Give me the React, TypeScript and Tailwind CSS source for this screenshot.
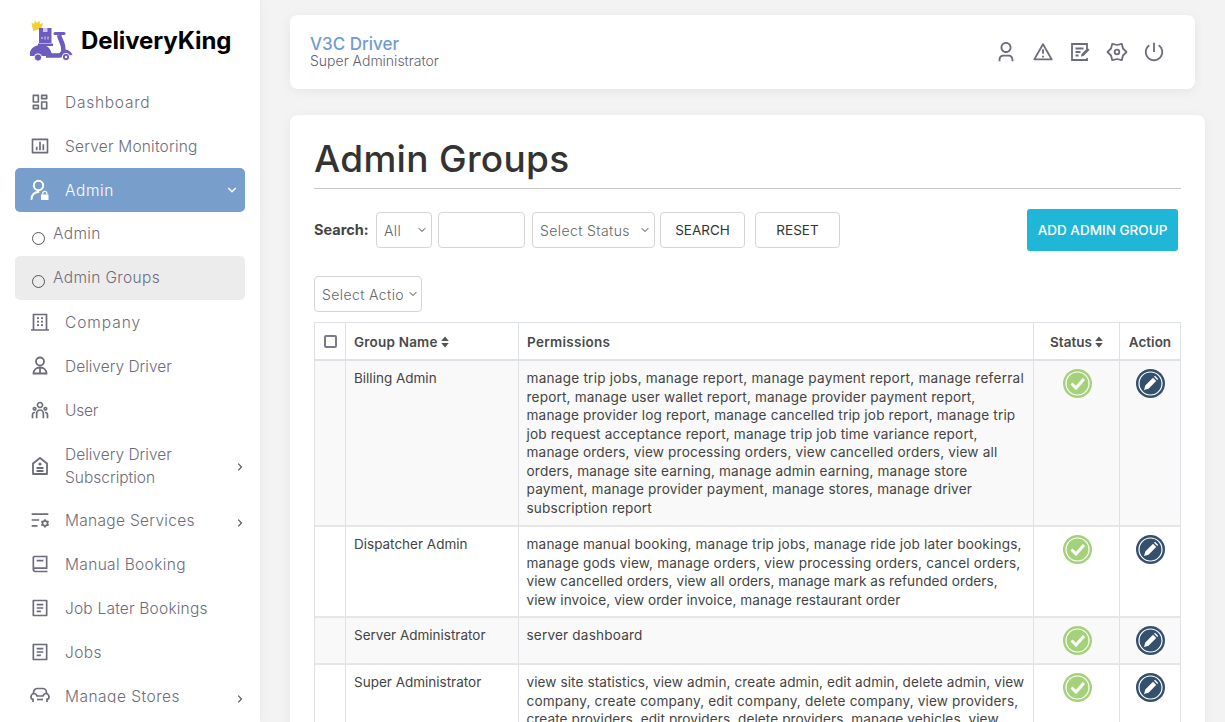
import React from "react";
import { ChevronDown } from "lucide-react";
import { RiDashboardLine, RiBarChartBoxLine, RiTeamLine, RiListSettingsLine, RiBook2Line, RiFileList2Line, RiArrowDownSLine, RiArrowRightSLine, RiUser3Line, RiAlertLine, RiShutDownLine } from "react-icons/ri";

const F = "font-['Inter','Liberation_Sans',sans-serif]";

const IconAdmin = () => (
  <svg width="20" height="22" viewBox="0 0 20 22" fill="none">
    <circle cx="8.5" cy="6.5" r="4.7" stroke="currentColor" strokeWidth="2" />
    <path d="M1.5 20c0-4 3-7 7-7" stroke="currentColor" strokeWidth="2" strokeLinecap="round" />
    <path d="M11 15.5h7.5V21H11z" fill="currentColor" />
    <path d="M12.8 15.5v-1.2a2 2 0 0 1 4 0v1.2" stroke="currentColor" strokeWidth="1.3" />
  </svg>
);
const IconCompany = () => (
  <svg width="20" height="20" viewBox="0 0 20 20" fill="none" stroke="currentColor" strokeWidth="1.7">
    <path d="M3.500 18V2.500h13V18M1 18h18" />
    <path d="M7 6.200h2M11 6.200h2M7 9.700h2M11 9.700h2M7 13.200h2M11 13.200h2" strokeWidth="1.800" />
  </svg>
);
const IconDriver = () => (
  <svg width="20" height="20" viewBox="0 0 20 20" fill="none" stroke="currentColor" strokeWidth="1.8">
    <circle cx="10" cy="5.500" r="4" />
    <path d="M3.500 17.500c0-3.800 2.800-6 6.500-6s6.500 2.200 6.500 6zM10 11.500v6" />
  </svg>
);
const IconSub = () => (
  <svg width="20" height="20" viewBox="0 0 20 20" fill="none" stroke="currentColor" strokeWidth="1.8">
    <path d="M3 7.500 10 2l7 5.500V18H3z" strokeLinejoin="round" />
    <circle cx="10" cy="8" r="1.600" fill="currentColor" stroke="none" />
    <path d="M6.500 12h7M6.500 15h7" />
  </svg>
);
const IconStore = () => (
  <svg width="20" height="20" viewBox="0 0 20 20" fill="none" stroke="currentColor" strokeWidth="1.700" strokeLinejoin="round">
    <path d="M3.500 7.500V6.500a4 4 0 0 1 4-4h5a4 4 0 0 1 4 4v1" />
    <path d="M3 16v-3H2.500C1.500 13 1 12 1 11c0-2 1.500-3.500 3-3.500 1.500 0 2.500 1 3 2.500h6c.5-1.500 1.500-2.500 3-2.500 1.500 0 3 1.500 3 3.500 0 1-.5 2-1.500 2H17v3" />
    <path d="M7 13.500h6" />
  </svg>
);
const IconEdit = () => (
  <svg width="22" height="22" viewBox="0 0 22 22" fill="none" stroke="currentColor" strokeWidth="1.800">
    <path d="M18 8V3H3v16h15v-2" />
    <path d="M6.500 7.500h8M6.500 11h5M6.500 14.500h3" />
    <path d="m12 15.500.5-2.500 6-6 2 2-6 6z" fill="currentColor" stroke="none" />
  </svg>
);
const IconGear = () => (
  <svg width="22" height="22" viewBox="0 0 22 22" fill="none" stroke="currentColor" strokeWidth="1.800" strokeLinejoin="round">
    <path d="M20.500 11 17 14.500 15.750 19.200 11 18 6.250 19.200 5 14.500 1.500 11 5 7.500 6.250 2.800 11 4 15.750 2.800 17 7.500z" />
    <circle cx="11" cy="11" r="2.300" />
  </svg>
);
const Logo = () => (
  <svg width="46" height="44" viewBox="0 0 46 44">
    <path d="M4 8 3.500 4.500 6 6l1-3.500L9 5l2.500-2.500.5 3.500 3-1-1.500 5.500-8 2.500z" fill="#f5cf2f" />
    <path d="M11 10h12.500v15H11z" fill="#6d5bbd" />
    <path d="M15 10h4.500v4H15z" fill="#cfc8ec" />
    <path d="M13 20h2M17 18.500v3M20 18.500v3" stroke="#e4e0f6" strokeWidth="1" />
    <path d="M10 25.500h15v2.500H10z" fill="#6d5bbd" />
    <path d="M2 38c-1-7 4-11 11-11s10 4 11 10l1 1z" fill="#6d5bbd" />
    <path d="M18 37.500H31C35 37.500 36 33 35 28 34 24 32 21 31 17" stroke="#6d5bbd" strokeWidth="4.500" fill="none" />
    <path d="M27 15.500H36" stroke="#6d5bbd" strokeWidth="3" strokeLinecap="round" />
    <path d="M31 38C31.500 31 41 29 44.500 37z" fill="#6d5bbd" />
    <circle cx="10" cy="39.500" r="3.700" fill="#6d5bbd" stroke="#fff" strokeWidth="1" />
    <circle cx="38" cy="39" r="3.700" fill="#6d5bbd" stroke="#fff" strokeWidth="1" />
    <circle cx="38" cy="39" r="1.200" fill="#fff" />
  </svg>
);

type Item = { icon: React.ReactNode; label: React.ReactNode; arrow?: boolean; two?: boolean; tr?: string };
const afterItems: Item[] = [
  { icon: <IconCompany />, label: "Company", tr: "tracking-[0.95px]" },
  { icon: <IconDriver />, label: "Delivery Driver", tr: "tracking-[0px]" },
  { icon: <RiTeamLine size={20} />, label: "User", tr: "tracking-[-0.2px]" },
  { icon: <IconSub />, label: <>Delivery Driver<br />Subscription</>, arrow: true, two: true, tr: "tracking-[0px]" },
  { icon: <RiListSettingsLine size={20} />, label: "Manage Services", arrow: true, tr: "tracking-[0.3px]" },
  { icon: <RiBook2Line size={20} />, label: "Manual Booking", tr: "tracking-[0.35px]" },
  { icon: <RiFileList2Line size={20} />, label: "Job Later Bookings", tr: "tracking-[0.2px]" },
  { icon: <RiFileList2Line size={20} />, label: "Jobs", tr: "tracking-[0.4px]" },
  { icon: <IconStore />, label: "Manage Stores", arrow: true, tr: "tracking-[0.5px]" },
];

const NavRow = ({ icon, label, arrow, two, tr }: Item) => (
  <div className={`flex items-center pl-[15px] pr-[15px] mx-[15px] text-[#6c6c7c] ${two ? "h-[66px] pt-[2px]" : "h-[44px]"}`}>
    <span className="w-[20px] flex justify-center shrink-0">{icon}</span>
    <span className={`ml-[15px] flex-1 text-[15.500px] leading-[23px] font-light ${tr ?? "tracking-[0.2px]"}`}>{label}</span>
    {arrow && <RiArrowRightSLine size={14} className={`text-[#555] -mr-[17px] ${two ? "mt-[2px]" : "mt-[6px]"}`} />}
  </div>
);

const Sidebar = () => (
  <aside className="w-[260px] shrink-0 bg-white shadow-[0_0_12px_rgba(0,0,0,0.05)] flex flex-col h-screen">
    <div className="flex items-center h-[80px] pl-[28px] shrink-0">
      <Logo />
      <span className="ml-[7px] mt-[1px] text-[24px] font-bold text-black tracking-[-0.1px]">DeliveryKing</span>
    </div>
    <nav className="h-[623px] overflow-hidden">
      <NavRow icon={<RiDashboardLine size={20} />} label="Dashboard" tr="tracking-[0.75px]" />
      <NavRow icon={<RiBarChartBoxLine size={20} />} label="Server Monitoring" />
      <div className="flex items-center h-[44px] mx-[15px] pl-[15px] pr-[5px] rounded-[5px] bg-[#789ecc] text-white">
        <span className="w-[20px] flex justify-center"><IconAdmin /></span>
        <span className="ml-[15px] flex-1 text-[15.500px] tracking-[0.6px] font-light pt-[1px]">Admin</span>
        <RiArrowDownSLine size={16} />
      </div>
      <div className="flex items-center h-[44px] mx-[15px] pl-[17px] text-[#6c6c7c]">
        <span className="w-[13px] h-[13px] mt-[9px] rounded-full border border-[#555] shrink-0" />
        <span className="ml-[8px] text-[15.500px] font-light leading-none tracking-[0.35px] -mt-[1px]">Admin</span>
      </div>
      <div className="flex items-center h-[44px] mx-[15px] pl-[17px] rounded-[5px] bg-[#ececec] text-[#6c6c7c]">
        <span className="w-[13px] h-[13px] mt-[7px] rounded-full border border-[#555] shrink-0" />
        <span className="ml-[8px] text-[15.500px] font-light leading-none tracking-[0.35px] -mt-[1px]">Admin Groups</span>
      </div>
      {afterItems.map((it, i) => <NavRow key={i} {...it} />)}
    </nav>
  </aside>
);

const Lines = ({ lines }: { lines: (string | [string, string])[] }) => (
  <>
    {lines.map((l, i) =>
      typeof l === "string"
        ? <span key={i} className="block whitespace-nowrap">{l}</span>
        : <span key={i} className={`block whitespace-nowrap ${l[1]}`}>{l[0]}</span>
    )}
  </>
);

const rows: { name: string; bg: string; h: string; lines: (string | [string, string])[] }[] = [
  { name: "Billing Admin", bg: "bg-[#f9f9f9]", h: "h-[166px]", lines: [
    ["manage trip jobs, manage report, manage payment report, manage referral", "tracking-[0.23px]"],
    "report, manage user wallet report, manage provider payment report,",
    "manage provider log report, manage cancelled trip job report, manage trip",
    "job request acceptance report, manage trip job time variance report,",
    "manage orders, view processing orders, view cancelled orders, view all",
    "orders, manage site earning, manage admin earning, manage store",
    "payment, manage provider payment, manage stores, manage driver",
    "subscription report",
  ]},
  { name: "Dispatcher Admin", bg: "bg-white", h: "h-[91px]", lines: [
    "manage manual booking, manage trip jobs, manage ride job later bookings,",
    "manage gods view, manage orders, view processing orders, cancel orders,",
    ["view cancelled orders, view all orders, manage mark as refunded orders,", "tracking-[0.05px]"],
    ["view invoice, view order invoice, manage restaurant order", "tracking-[0.05px]"],
  ]},
  { name: "Server Administrator", bg: "bg-[#f9f9f9]", h: "h-[47px]", lines: ["server dashboard"] },
  { name: "Super Administrator", bg: "bg-white", h: "", lines: [
    ["view site statistics, view admin, create admin, edit admin, delete admin, view", "tracking-[0.08px]"],
    "company, create company, edit company, delete company, view providers,",
    ["create providers, edit providers, delete providers, manage vehicles, view", "tracking-[0.08px]"],
  ]},
];

const Sort = () => (
  <svg width="8" height="12" viewBox="0 0 8 12" className="ml-[3px] inline-block" fill="#555">
    <path d="M4 0.500 7.800 5H.2zM4 11.500.2 7h7.600z" />
  </svg>
);

const StatusIcon = () => (
  <svg width="29" height="29" viewBox="0 0 29 29">
    <circle cx="14.500" cy="14.500" r="14.500" fill="#a4d279" />
    <circle cx="14.500" cy="14.500" r="11.500" fill="#a4d279" stroke="#fff" strokeWidth="1.200" />
    <path d="M8.500 14.500 13 19l8-9" fill="none" stroke="#fff" strokeWidth="3" />
  </svg>
);
const ActionIcon = () => (
  <svg width="29" height="29" viewBox="0 0 29 29">
    <circle cx="14.500" cy="14.500" r="14.500" fill="#34506c" />
    <circle cx="14.500" cy="14.500" r="11.500" fill="#34506c" stroke="#fff" strokeWidth="1.200" />
    <path d="M8 21l1.300-4.500 7.700-7.700 3.200 3.200-7.700 7.700zM18 7.800l1-1 3.200 3.200-1 1z" fill="#fff" />
  </svg>
);

const ctrl = "h-[36px] rounded-[4px] border border-[#d5d5d5] bg-white text-[14px] text-[#666] font-light";
const btn = "h-[36px] rounded-[4px] border border-[#d5d5d5] bg-white text-[13.500px] text-[#333] flex items-center justify-center";

const Sel = ({ label, cls, right }: { label: string; cls: string; right: string }) => (
  <div className={`relative ${cls}`}>
    <select className={`${ctrl} w-full appearance-none pl-[7px] pr-[18px] tracking-[0.4px]`}><option>{label}</option></select>
    <ChevronDown size={12} strokeWidth={2} className={`absolute top-[12px] text-[#444] pointer-events-none ${right}`} />
  </div>
);

const td = "border-r border-[#dee2e6] shrink-0";

const Table = () => (
  <div className="w-[867px] border-l border-t border-[#dee2e6] text-[13.500px] leading-[18.570px] text-[#444]">
    <div className="flex h-[38px] border-b-2 border-[#dee2e6] font-semibold text-[13.500px] text-[#4a4a4a]">
      <div className={`${td} w-[31px] flex items-center justify-center`}>
        <span className="w-[13px] h-[13px] rounded-[2px] border-2 border-[#7a7a8a]" />
      </div>
      <div className={`${td} w-[173px] flex items-center pl-[8px] pt-[2px] tracking-[0.2px]`}>Group Name<Sort /></div>
      <div className={`${td} w-[515px] flex items-center pl-[8px] pt-[2px] tracking-[0.3px]`}>Permissions</div>
      <div className={`${td} w-[86px] flex items-center justify-center pt-[2px]`}>Status<Sort /></div>
      <div className={`${td} w-[61px] flex items-center justify-center pt-[2px]`}>Action</div>
    </div>
    {rows.map((r) => (
      <div key={r.name} className={`flex border-b-2 border-[#e6e6e6] ${r.bg} ${r.h}`}>
        <div className={`${td} w-[31px]`} />
        <div className={`${td} w-[173px] px-[8px] pt-[8px]`}>{r.name}</div>
        <div className={`${td} w-[515px] pl-[7.500px] pt-[8px] text-[13.600px] tracking-[0.17px]`}><Lines lines={r.lines} /></div>
        <div className={`${td} w-[86px] flex justify-center pt-[8px] pl-[1px]`}><StatusIcon /></div>
        <div className={`${td} w-[61px] flex justify-center pt-[8px]`}><ActionIcon /></div>
      </div>
    ))}
  </div>
);

export default function App() {
  return (
    <div className={`${F} flex h-screen overflow-hidden bg-[#f3f3f3]`}>
      <Sidebar />
      <main className="flex-1 min-w-0 pl-[30px] pr-[20px] pt-[15px]">
        <header className="h-[74px] mr-[10px] rounded-[8px] bg-white shadow-[0_2px_12px_rgba(0,0,0,0.06)] flex items-center pl-[20px] pr-[30px]">
          <div className="flex-1">
            <div className="text-[17px] leading-[19px] font-medium text-[#6f9cd3]">V3C Driver</div>
            <div className="text-[14px] leading-[16px] -mt-[1px] font-light text-[#5f5f6f]">Super Administrator</div>
          </div>
          <div className="flex items-center gap-[15px] text-[#6c6c7c]">
            <RiUser3Line size={22} />
            <RiAlertLine size={22} />
            <IconEdit />
            <IconGear />
            <RiShutDownLine size={22} />
          </div>
        </header>
        <section className="mt-[26px] rounded-[8px] bg-white pl-[24px] pt-[20px] h-[700px] shadow-[0_2px_12px_rgba(0,0,0,0.05)]">
          <h1 className="text-[37px] leading-[48px] font-[450] text-[#333] tracking-[0.3px] pb-[5px] border-b border-[#c8c8c8] mr-[24px]">Admin Groups</h1>
          <div className="flex items-center mt-[20px] h-[42px]">
            <span className="w-[62px] text-[14.500px] font-bold text-[#444]">Search:</span>
            <Sel label="All" cls="w-[56px] h-[36px]" right="right-[4px]" />
            <input className={`${ctrl} w-[87px] ml-[6px]`} />
            <Sel label="Select Status" cls="w-[123px] ml-[7px] h-[36px]" right="right-[4px]" />
            <button className={`${btn} w-[85px] ml-[5px]`}>SEARCH</button>
            <button className={`${btn} w-[85px] ml-[10px]`}>RESET</button>
            <button className="ml-[187px] w-[151px] h-[42px] rounded-[3px] bg-[#1fb6d8] text-white text-[13.500px] font-medium flex items-center justify-center">ADD ADMIN GROUP</button>
          </div>
          <div className="mt-[25px]">
            <Sel label="Select Action" cls="w-[108px] h-[36px]" right="right-[3px]" />
          </div>
          <div className="mt-[10px]"><Table /></div>
        </section>
      </main>
    </div>
  );
}
